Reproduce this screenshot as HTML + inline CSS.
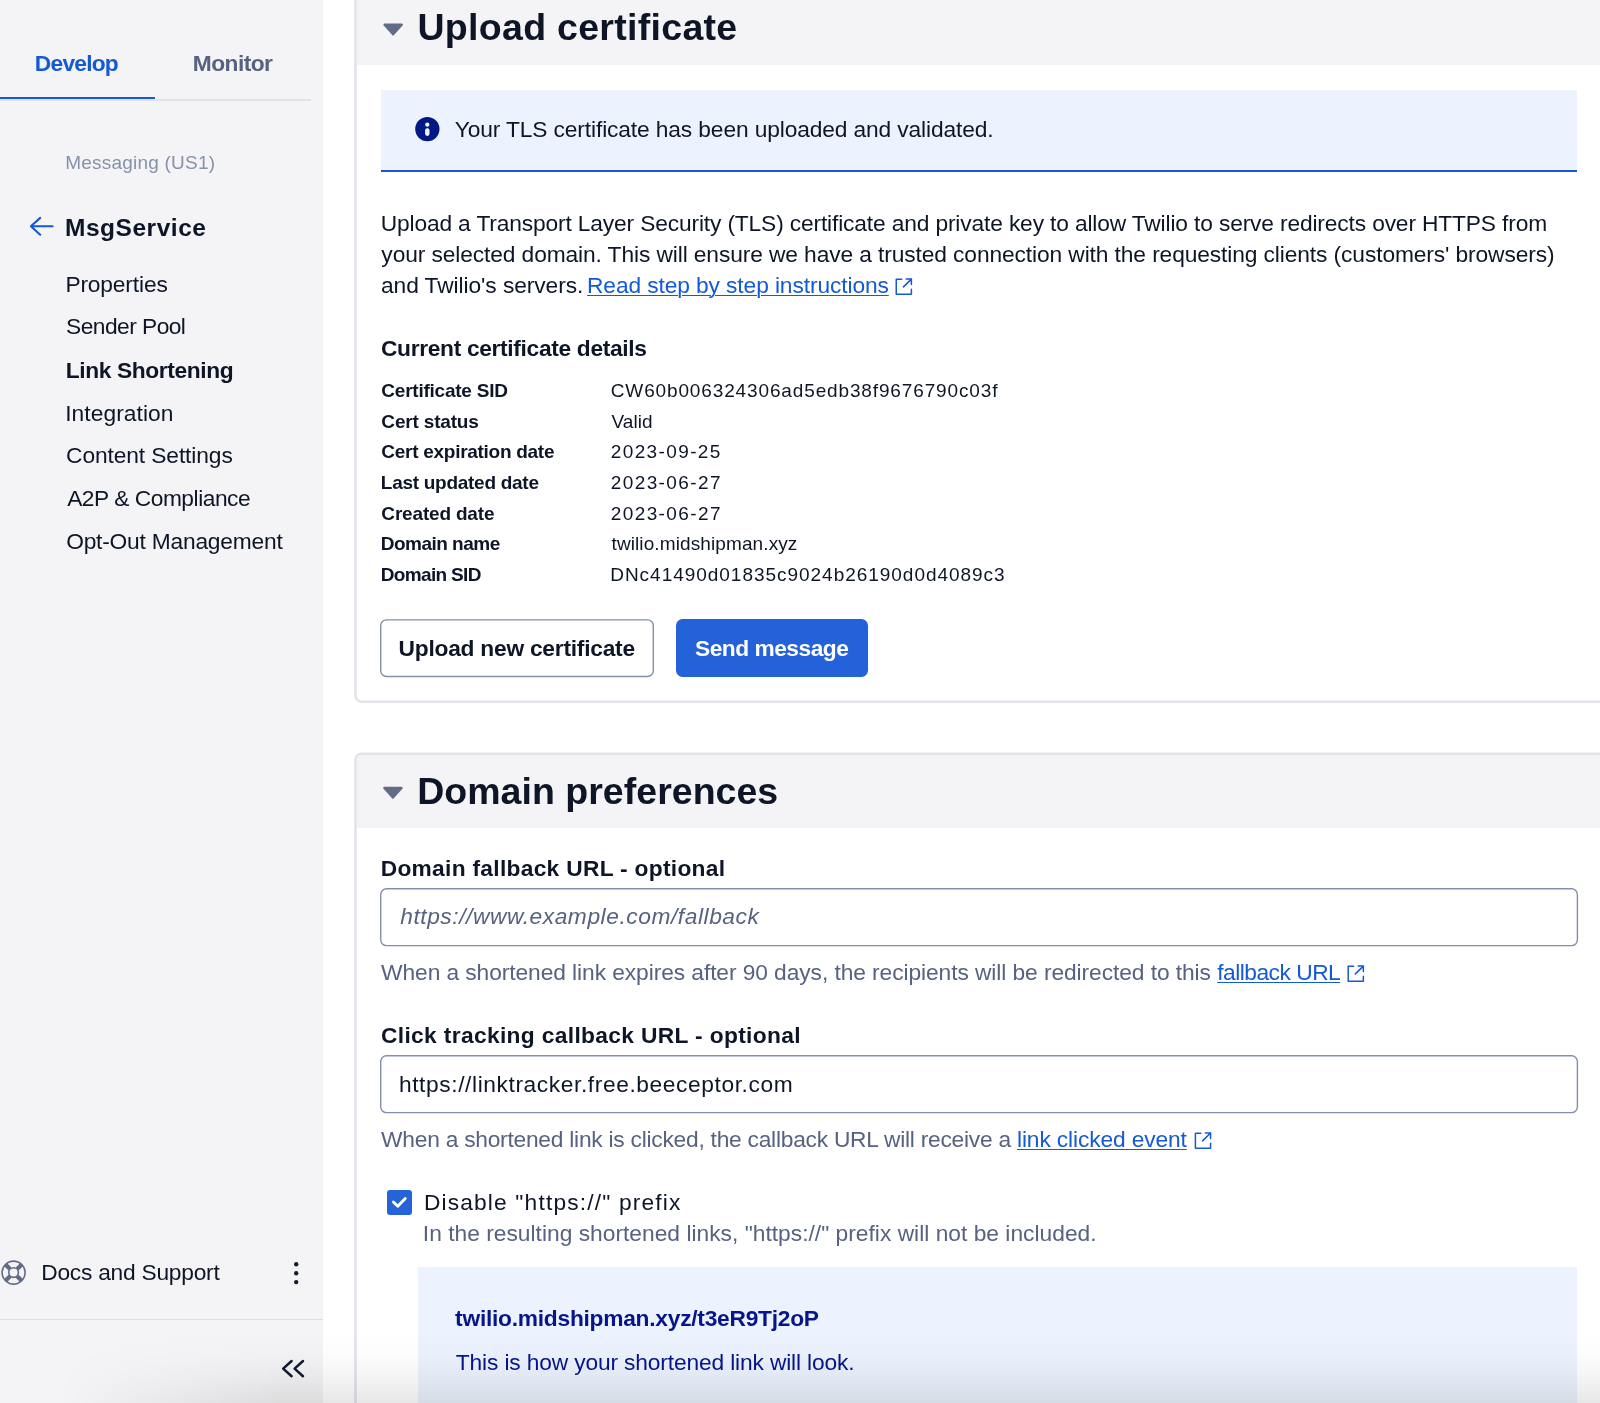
<!DOCTYPE html>
<html lang="en">
<head>
<meta charset="utf-8">
<title>Link Shortening</title>
<style>
html,body{margin:0;padding:0;width:1600px;height:1403px;overflow:hidden;background:#ffffff;}
body{font-family:"Liberation Sans",sans-serif;color:#121c2d;}
.root{position:relative;width:1600px;height:1403px;overflow:hidden;background:#ffffff;}
.a{position:absolute;}
.t{position:absolute;white-space:pre;font-family:"Liberation Sans",sans-serif;}
.sidebar{left:0;top:0;width:323.25px;height:1403px;background:#f4f4f6;}
.card{left:354px;width:1300px;border:2.4px solid #e1e3ea;border-radius:7px;background:#ffffff;box-sizing:border-box;}
.hdr{left:356.6px;width:1244px;background:#f4f4f6;}
.callout{background:#ecf3fe;}
.input{left:380.3px;width:1197.8px;height:57.2px;box-sizing:border-box;border:1.5px solid #8891aa;border-radius:6.5px;background:#fff;}
svg{position:absolute;overflow:visible;}
</style>
</head>
<body>
<div class="root">
<!-- sidebar -->
<div class="a sidebar"></div>
<div class="a" style="left:0;top:99.2px;width:311px;height:1.5px;background:#e1e3ea;"></div>
<div class="a" style="left:0;top:96.8px;width:154.8px;height:2.7px;background:#1459d6;"></div>
<div class="a" style="left:0;top:1318.7px;width:323.25px;height:1.3px;background:#dcdee6;"></div>

<!-- cards -->
<div class="a hdr" style="top:0;height:64.5px;"></div>
<div class="a hdr" style="top:754.6px;height:73.3px;border-top-left-radius:5px;"></div>
<svg width="1600" height="1403" viewBox="0 0 1600 1403" style="left:0;top:0;">
  <g fill="none" stroke="#e2e4ec" stroke-width="2.6">
    <path d="M355.5 -10V695.7a6 6 0 0 0 6 6H1610"/>
    <path d="M1610 753.7H361.5a6 6 0 0 0 -6 6V1420"/>
  </g>
</svg>

<!-- alert -->
<div class="a callout" style="left:381.25px;top:89.5px;width:1195.75px;height:80.5px;"></div>
<div class="a" style="left:381.25px;top:169.8px;width:1195.75px;height:2.6px;background:#1459d6;"></div>

<!-- buttons -->
<div class="a" style="left:676.25px;top:619px;width:191.25px;height:58px;border-radius:6.5px;background:#2462d9;"></div>

<!-- checkbox -->
<div class="a" style="left:387.4px;top:1190.2px;width:24.5px;height:24.6px;border-radius:3px;background:#2563d9;"></div>

<!-- preview box -->
<div class="a callout" style="left:417.8px;top:1266.5px;width:1159.2px;height:200px;"></div>

<!-- icons -->
<svg width="1600" height="1403" viewBox="0 0 1600 1403" style="left:0;top:0;">
  <!-- outlined button + inputs -->
  <g fill="#ffffff" stroke="#858fab" stroke-width="1.4">
    <rect x="380.7" y="619.9" width="272.6" height="56.6" rx="5.8"/>
    <rect x="380.7" y="888.8" width="1196.7" height="56.8" rx="5.8"/>
    <rect x="380.7" y="1055.8" width="1196.7" height="56.8" rx="5.8"/>
  </g>
  <!-- back arrow -->
  <g fill="none" stroke="#1459d6" stroke-width="2.1" stroke-linecap="round" stroke-linejoin="round">
    <path d="M52.6 226.3H31M40.2 217.9L30.9 226.3L40.2 234.7"/>
  </g>
  <!-- disclosure triangles -->
  <path d="M384.6 23.6H401.7a1.2 1.2 0 0 1 .9 2L394 35a1.2 1.2 0 0 1-1.8 0L383.7 25.6a1.2 1.2 0 0 1 .9-2Z" fill="#606b85"/>
  <path d="M384.4 786.8H401.5a1.2 1.2 0 0 1 .9 2L393.8 798.2a1.2 1.2 0 0 1-1.8 0L383.5 788.8a1.2 1.2 0 0 1 .9-2Z" fill="#606b85"/>
  <!-- info icon -->
  <circle cx="427.35" cy="129.1" r="12.15" fill="#021985"/>
  <circle cx="427.3" cy="124.7" r="2.15" fill="#ecf3fe"/>
  <rect x="425.1" y="128.2" width="4.4" height="7.7" rx="2.1" fill="#ecf3fe"/>
  <!-- external link icons -->
  <g fill="none" stroke="#1459d6" stroke-width="1.5" stroke-linecap="round" stroke-linejoin="round">
    <path d="M901.7 279.25H896.25V294.25H911.4V289.2M903.4 286.9L911.4 279.1M906.2 279.1H911.4V284.5"/>
    <path transform="translate(451.95 687)" d="M901.7 279.25H896.25V294.25H911.4V289.2M903.4 286.9L911.4 279.1M906.2 279.1H911.4V284.5"/>
    <path transform="translate(299.15 853.95)" d="M901.7 279.25H896.25V294.25H911.4V289.2M903.4 286.9L911.4 279.1M906.2 279.1H911.4V284.5"/>
  </g>
  <!-- checkmark -->
  <path d="M393.4 1202L397.8 1206.2L405.2 1198.5" fill="none" stroke="#ffffff" stroke-width="2.9" stroke-linecap="round" stroke-linejoin="round"/>
  <!-- lifebuoy -->
  <g fill="none" stroke="#606b85">
    <circle cx="13.6" cy="1272.6" r="11.5" stroke-width="1.6"/>
    <circle cx="13.6" cy="1272.6" r="4.8" stroke-width="1.6"/>
    <path d="M10.00 1269.00L5.50 1264.50M10.00 1276.20L5.50 1280.70M17.20 1269.00L21.70 1264.50M17.20 1276.20L21.70 1280.70" stroke-width="4.2"/>
  </g>
  <!-- kebab -->
  <g fill="#121c2d"><circle cx="296.2" cy="1264.3" r="2.2"/><circle cx="296.2" cy="1273.2" r="2.2"/><circle cx="296.2" cy="1282.1" r="2.2"/></g>
  <!-- collapse chevrons -->
  <g fill="none" stroke="#121c2d" stroke-width="2.5" stroke-linecap="round" stroke-linejoin="round">
    <path d="M291.6 1361L283.2 1368.6L291.6 1376.2M303 1361L294.6 1368.6L303 1376.2"/>
  </g>
</svg>

<div class="a" style="left:0;top:0;width:1600px;height:1403px;will-change:transform;">
<div class="t" style="left:34.84px;top:50px;font-size:22.75px;line-height:26px;letter-spacing:-0.760px;color:#1459d6;font-weight:700;">Develop</div>
<div class="t" style="left:192.79px;top:50px;font-size:22.75px;line-height:26px;letter-spacing:-0.533px;color:#56627f;font-weight:700;">Monitor</div>
<div class="t" style="left:65.15px;top:152px;font-size:19.0px;line-height:21px;letter-spacing:0.226px;color:#8891aa;">Messaging (US1)</div>
<div class="t" style="left:64.99px;top:214px;font-size:24.5px;line-height:27px;letter-spacing:0.530px;color:#0d1526;font-weight:700;">MsgService</div>
<div class="t" style="left:65.39px;top:271px;font-size:22.75px;line-height:26px;letter-spacing:-0.142px;color:#0d1526;">Properties</div>
<div class="t" style="left:66.10px;top:313px;font-size:22.75px;line-height:26px;letter-spacing:-0.538px;color:#0d1526;">Sender Pool</div>
<div class="t" style="left:65.75px;top:357px;font-size:22.75px;line-height:26px;letter-spacing:-0.382px;color:#0d1526;font-weight:700;">Link Shortening</div>
<div class="t" style="left:65.20px;top:400px;font-size:22.75px;line-height:26px;letter-spacing:0.068px;color:#0d1526;">Integration</div>
<div class="t" style="left:66.05px;top:442px;font-size:22.75px;line-height:26px;letter-spacing:-0.098px;color:#0d1526;">Content Settings</div>
<div class="t" style="left:67.14px;top:485px;font-size:22.75px;line-height:26px;letter-spacing:-0.466px;color:#0d1526;">A2P &amp; Compliance</div>
<div class="t" style="left:66.17px;top:528px;font-size:22.75px;line-height:26px;letter-spacing:-0.204px;color:#0d1526;">Opt-Out Management</div>
<div class="t" style="left:41.28px;top:1259px;font-size:22.75px;line-height:26px;letter-spacing:-0.244px;color:#0d1526;">Docs and Support</div>
<div class="t" style="left:417.48px;top:6px;font-size:37.5px;line-height:42px;letter-spacing:0.298px;color:#0d1526;font-weight:700;">Upload certificate</div>
<div class="t" style="left:454.73px;top:116px;font-size:22.75px;line-height:26px;letter-spacing:-0.120px;color:#0d1526;">Your TLS certificate has been uploaded and validated.</div>
<div class="t" style="left:380.69px;top:210px;font-size:22.75px;line-height:26px;letter-spacing:-0.142px;color:#0d1526;">Upload a Transport Layer Security (TLS) certificate and private key to allow Twilio to serve redirects over HTTPS from</div>
<div class="t" style="left:381.37px;top:241px;font-size:22.75px;line-height:26px;letter-spacing:-0.101px;color:#0d1526;">your selected domain. This will ensure we have a trusted connection with the requesting clients (customers' browsers)</div>
<div class="t" style="left:380.96px;top:272px;font-size:22.75px;line-height:26px;letter-spacing:-0.065px;color:#0d1526;">and Twilio's servers.</div>
<div class="t" style="left:587.00px;top:272px;font-size:22.75px;line-height:26px;letter-spacing:-0.099px;color:#1459d6;text-decoration:underline;text-decoration-thickness:1.4px;text-underline-offset:2px;">Read step by step instructions</div>
<div class="t" style="left:381.00px;top:335px;font-size:22.75px;line-height:26px;letter-spacing:-0.321px;color:#0d1526;font-weight:700;">Current certificate details</div>
<div class="t" style="left:381.35px;top:380px;font-size:19.0px;line-height:21px;letter-spacing:-0.235px;color:#0d1526;font-weight:700;">Certificate SID</div>
<div class="t" style="left:610.76px;top:380px;font-size:19.0px;line-height:21px;letter-spacing:0.866px;color:#0d1526;">CW60b006324306ad5edb38f9676790c03f</div>
<div class="t" style="left:381.35px;top:411px;font-size:19.0px;line-height:21px;letter-spacing:-0.172px;color:#0d1526;font-weight:700;">Cert status</div>
<div class="t" style="left:611.47px;top:411px;font-size:19.0px;line-height:21px;letter-spacing:0.069px;color:#0d1526;">Valid</div>
<div class="t" style="left:381.35px;top:441px;font-size:19.0px;line-height:21px;letter-spacing:-0.279px;color:#0d1526;font-weight:700;">Cert expiration date</div>
<div class="t" style="left:610.79px;top:441px;font-size:19.0px;line-height:21px;letter-spacing:1.375px;color:#0d1526;">2023-09-25</div>
<div class="t" style="left:380.81px;top:472px;font-size:19.0px;line-height:21px;letter-spacing:-0.275px;color:#0d1526;font-weight:700;">Last updated date</div>
<div class="t" style="left:610.79px;top:472px;font-size:19.0px;line-height:21px;letter-spacing:1.390px;color:#0d1526;">2023-06-27</div>
<div class="t" style="left:381.35px;top:503px;font-size:19.0px;line-height:21px;letter-spacing:-0.179px;color:#0d1526;font-weight:700;">Created date</div>
<div class="t" style="left:610.79px;top:503px;font-size:19.0px;line-height:21px;letter-spacing:1.390px;color:#0d1526;">2023-06-27</div>
<div class="t" style="left:380.81px;top:533px;font-size:19.0px;line-height:21px;letter-spacing:-0.518px;color:#0d1526;font-weight:700;">Domain name</div>
<div class="t" style="left:611.50px;top:533px;font-size:19.0px;line-height:21px;letter-spacing:0.106px;color:#0d1526;">twilio.midshipman.xyz</div>
<div class="t" style="left:380.81px;top:564px;font-size:19.0px;line-height:21px;letter-spacing:-0.669px;color:#0d1526;font-weight:700;">Domain SID</div>
<div class="t" style="left:610.24px;top:564px;font-size:19.0px;line-height:21px;letter-spacing:0.971px;color:#0d1526;">DNc41490d01835c9024b26190d0d4089c3</div>
<div class="t" style="left:398.60px;top:635px;font-size:22.75px;line-height:26px;letter-spacing:-0.239px;color:#0d1526;font-weight:700;">Upload new certificate</div>
<div class="t" style="left:695.02px;top:635px;font-size:22.75px;line-height:26px;letter-spacing:-0.496px;color:#ffffff;font-weight:700;">Send message</div>
<div class="t" style="left:417.18px;top:770px;font-size:37.5px;line-height:42px;letter-spacing:0.029px;color:#0d1526;font-weight:700;">Domain preferences</div>
<div class="t" style="left:380.68px;top:855px;font-size:22.75px;line-height:26px;letter-spacing:0.295px;color:#0d1526;font-weight:700;">Domain fallback URL - optional</div>
<div class="t" style="left:400.19px;top:903px;font-size:22.75px;line-height:26px;letter-spacing:0.558px;color:#56627f;font-style:italic;">https://www.example.com/fallback</div>
<div class="t" style="left:381.08px;top:959px;font-size:22.75px;line-height:26px;letter-spacing:-0.071px;color:#56627f;">When a shortened link expires after 90 days, the recipients will be redirected to this</div>
<div class="t" style="left:1217.20px;top:959px;font-size:22.75px;line-height:26px;letter-spacing:-0.492px;color:#1459d6;text-decoration:underline;text-decoration-thickness:1.4px;text-underline-offset:2px;">fallback URL</div>
<div class="t" style="left:381.00px;top:1022px;font-size:22.75px;line-height:26px;letter-spacing:0.350px;color:#0d1526;font-weight:700;">Click tracking callback URL - optional</div>
<div class="t" style="left:398.96px;top:1071px;font-size:22.75px;line-height:26px;letter-spacing:0.594px;color:#0d1526;">https://linktracker.free.beeceptor.com</div>
<div class="t" style="left:381.08px;top:1126px;font-size:22.75px;line-height:26px;letter-spacing:-0.239px;color:#56627f;">When a shortened link is clicked, the callback URL will receive a</div>
<div class="t" style="left:1017.00px;top:1126px;font-size:22.75px;line-height:26px;letter-spacing:-0.126px;color:#1459d6;text-decoration:underline;text-decoration-thickness:1.4px;text-underline-offset:2px;">link clicked event</div>
<div class="t" style="left:423.89px;top:1189px;font-size:22.75px;line-height:26px;letter-spacing:1.163px;color:#0d1526;">Disable "https://" prefix</div>
<div class="t" style="left:422.87px;top:1220px;font-size:22.75px;line-height:26px;letter-spacing:0.017px;color:#56627f;">In the resulting shortened links, "https://" prefix will not be included.</div>
<div class="t" style="left:455.12px;top:1305px;font-size:22.75px;line-height:26px;letter-spacing:-0.252px;color:#06158a;font-weight:700;">twilio.midshipman.xyz/t3eR9Tj2oP</div>
<div class="t" style="left:455.82px;top:1349px;font-size:22.75px;line-height:26px;letter-spacing:-0.142px;color:#06158a;">This is how your shortened link will look.</div>
</div>

<!-- bottom screenshot shadow -->
<div class="a" style="left:0;top:1333px;width:1600px;height:70px;background:linear-gradient(to bottom,rgba(0,0,0,0) 0%,rgba(0,0,0,0.012) 30%,rgba(0,0,0,0.04) 60%,rgba(0,0,0,0.095) 100%);-webkit-mask-image:linear-gradient(to right,rgba(0,0,0,0) 60px,rgba(0,0,0,1) 280px);mask-image:linear-gradient(to right,rgba(0,0,0,0) 60px,rgba(0,0,0,1) 280px);"></div>
</div>
</body>
</html>
